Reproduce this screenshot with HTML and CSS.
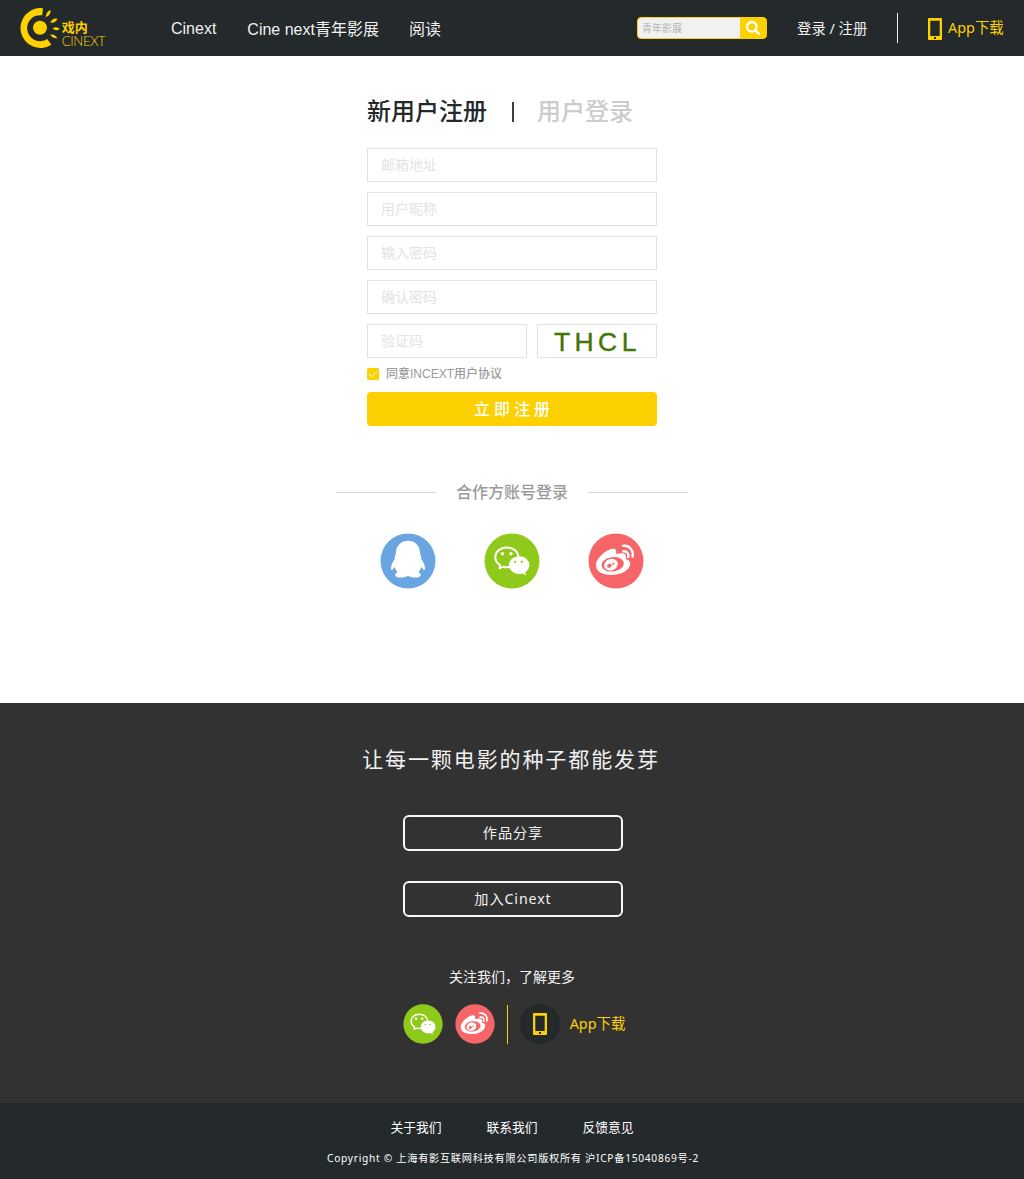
FILE: index.html
```html
<!DOCTYPE html>
<html lang="zh-CN">
<head>
<meta charset="utf-8">
<title>戏内 CINEXT</title>
<link rel="stylesheet" href="styles.css">
</head>
<body>
<svg class="defs" aria-hidden="true">
  <symbol id="qq" viewBox="0 0 56 56">
    <circle cx="28" cy="28" r="27.5" fill="#69a5e1"/>
    <path fill="#fff" d="M28 7.7C20 7.7 15.9 14 15.9 20C15.9 22 14.4 23 14.8 26C12.5 29 11 32.5 11 35.2C11 37.4 12.2 37.5 13 36.3C13.8 35 14.3 34 14.7 34.3C15.3 36.5 16.5 38 17.8 39.2C14 40.5 14.4 44.1 19 44.5C23 44.8 26.5 43.8 28 42.7C29.5 43.8 33 44.8 37 44.5C41.6 44.1 42 40.5 38.2 39.2C39.5 38 40.7 36.5 41.3 34.3C41.7 34 42.2 35 43 36.3C43.8 37.5 45 37.4 45 35.2C45 32.5 43.5 29 41.2 26C41.6 23 40.1 22 40.1 20C40.1 14 36 7.7 28 7.7Z"/>
  </symbol>
  <symbol id="wechat" viewBox="0 0 56 56">
    <circle cx="28" cy="28" r="27.5" fill="#8fc91a"/>
    <path fill="none" stroke="#fff" stroke-width="2" stroke-linejoin="round" d="M22.8 14.4C16.2 14.4 11.3 18.7 11.3 24.2C11.3 27.4 13.2 30.2 16 32L15.6 35.4L19 33.7C20.2 34 21.6 34.2 22.8 34.2C29.4 34.2 34.4 29.7 34.4 24.2C34.4 18.7 29.4 14.4 22.8 14.4Z"/>
    <circle cx="18.4" cy="20.7" r="1.7" fill="#fff"/><circle cx="27" cy="20.7" r="1.7" fill="#fff"/>
    <path fill="#fff" d="M35.2 23.2C29.4 23.2 25 27.1 25 32.1C25 37.1 29.4 41 35.2 41C36.5 41 37.7 40.8 38.8 40.5L42 42.3L41.2 39.2C43.8 37.7 45.4 35.1 45.4 32.1C45.4 27.1 41 23.2 35.2 23.2Z"/>
    <circle cx="31.2" cy="28.8" r="1.1" fill="#8fc91a"/><circle cx="37.8" cy="28.8" r="1.1" fill="#8fc91a"/>
  </symbol>
  <symbol id="weibo" viewBox="0 0 56 56">
    <circle cx="28" cy="28" r="27.5" fill="#f66669"/>
    <path fill="#fff" d="M24.6 15.8C18.5 16.5 8 25 8 32.3C8 38.7 14.5 42 22.8 42C34.5 42 42.2 36.3 42.2 30.7C42.2 27.9 40 26.7 37.6 26C39.2 20.7 36 18.7 28 21.2C28.8 17.6 28 15.4 24.6 15.8Z"/>
    <ellipse cx="24.7" cy="31.3" rx="11.2" ry="7.2" fill="#f66669" transform="rotate(-8 24.7 31.3)"/>
    <ellipse cx="23" cy="31.7" rx="7" ry="5.7" fill="#fff" transform="rotate(-20 23 31.7)"/>
    <ellipse cx="21.4" cy="32.8" rx="2.4" ry="1.9" fill="#f66669" transform="rotate(-20 21.4 32.8)"/>
    <circle cx="25.3" cy="30.8" r="1.1" fill="#f66669"/>
    <path fill="none" stroke="#fff" stroke-width="2.4" stroke-linecap="round" d="M35 12.9C41 11.8 46 17.5 44.5 23.6M35.3 18.3C38.8 17.8 41.2 20.6 40.1 24"/>
  </symbol>
  <symbol id="phone" viewBox="0 0 14 22">
    <path fill="#fdd000" fill-rule="evenodd" d="M.8 0H13.2Q14 0 14 .8V21.2Q14 22 13.2 22H.8Q0 22 0 21.2V.8Q0 0 .8 0ZM2.3 2.8V18H11.7V2.8ZM6 19.1V20.9H8V19.1Z"/>
  </symbol>
</svg>

<header class="topbar">
  <svg class="logo" viewBox="0 0 90 44">
    <g fill="#fdd000">
      <path d="M23 2.2A20 20 0 1 0 31.4 38.8L27.3 33A13 13 0 1 1 22.2 9.3Z"/>
      <circle cx="20" cy="21.8" r="7"/>
      <path d="M25.7 11.2Q26 5.5 30.7 4Q30.7 9.5 25.7 11.2Z"/>
      <path d="M30.3 16.5Q32.8 11.6 37.5 12.8Q35.2 17.7 30.3 16.5Z"/>
      <path d="M32.5 22.5Q36.5 19.7 39.8 23Q36 25.8 32.5 22.5Z"/>
      <path d="M30.3 28.5Q35 27.9 37.3 32.2Q32.6 32.9 30.3 28.5Z"/>
    </g>
    <text class="logo-cn" x="41.8" y="25.6">戏内</text>
    <text class="logo-en" x="41.7" y="39.7" textLength="44">CINEXT</text>
  </svg>
  <nav class="mainnav">
    <a class="nav-en">Cinext</a>
    <a>Cine next青年影展</a>
    <a>阅读</a>
  </nav>
  <div class="search">
    <span class="search-field">青年影展</span>
    <svg class="search-icon" viewBox="0 0 26 22"><circle cx="11.8" cy="8.8" r="4.8"/><path d="M15.4 12.4L19 16"/></svg>
  </div>
  <a class="account">登录 / 注册</a>
  <span class="top-rule"></span>
  <a class="download"><svg class="phone"><use href="#phone"/></svg><span>App下载</span></a>
</header>

<main class="main">
  <div class="tabs">
    <span class="tab active">新用户注册</span>
    <span class="tab-rule"></span>
    <span class="tab">用户登录</span>
  </div>
  <form class="form">
    <div class="field">邮箱地址</div>
    <div class="field">用户昵称</div>
    <div class="field">输入密码</div>
    <div class="field">确认密码</div>
    <div class="captcha-row">
      <div class="field code">验证码</div>
      <div class="captcha">THCL</div>
    </div>
    <div class="agree">
      <svg class="check" viewBox="0 0 12 12"><rect width="12" height="12" rx="1.5" fill="#fdd000"/><path d="M2 6L5 8.8L10 3.5" fill="none" stroke="#fff"/></svg>
      <span>同意INCEXT用户协议</span>
    </div>
    <div class="submit">立即注册</div>
  </form>
  <div class="partner-title"><span>合作方账号登录</span></div>
  <div class="partners">
    <svg><use href="#qq"/></svg>
    <svg><use href="#wechat"/></svg>
    <svg><use href="#weibo"/></svg>
  </div>
</main>

<section class="promo">
  <h2 class="slogan">让每一颗电影的种子都能发芽</h2>
  <a class="outline-btn">作品分享</a>
  <a class="outline-btn">加入Cinext</a>
  <p class="follow">关注我们，了解更多</p>
  <div class="follow-row">
    <svg class="social"><use href="#wechat"/></svg>
    <svg class="social"><use href="#weibo"/></svg>
    <span class="follow-rule"></span>
    <span class="app-badge"><svg class="phone"><use href="#phone"/></svg></span>
    <a class="follow-app">App下载</a>
  </div>
</section>

<footer class="footer">
  <nav class="links"><a>关于我们</a><a>联系我们</a><a>反馈意见</a></nav>
  <p class="copyright">Copyright © 上海有影互联网科技有限公司版权所有 沪ICP备15040869号-2</p>
</footer>
</body>
</html>
```

FILE: styles.css
```css
* { box-sizing: border-box; }
body {
  margin: 0;
  width: 1024px;
  background: #fff;
  font-family: "Noto Sans", "Noto Sans CJK SC", sans-serif;
  font-size: 14px;
  line-height: 20px;
}
p, h2 { margin: 0; font-weight: 400; }
svg { display: block; flex: none; }
a, span { white-space: nowrap; }
.defs { display: none; }

.topbar {
  height: 56px;
  background: #24292c;
  display: flex;
  align-items: center;
  padding: 0 20px;
  color: #f1f1f1;
}
.logo { width: 90px; height: 44px; }
.logo-cn { font: 700 13px "Noto Sans CJK SC", sans-serif; fill: #fdd000; }
.logo-en { font: 300 13.2px Lato, sans-serif; fill: #fdd000; }
.mainnav {
  display: flex;
  gap: 31px;
  margin-left: 61px;
  padding-top: 3px;
  font-family: "Liberation Sans", "Noto Sans CJK SC", sans-serif;
  font-size: 16px;
}
.mainnav a:last-child { margin-left: -1px; }
.nav-en { margin-top: -1px; }
.search {
  width: 130px;
  height: 22px;
  margin-left: auto;
  display: flex;
  border: 1px solid #fdd000;
  border-radius: 4px;
  background: #fdd000;
  overflow: hidden;
}
.search-field {
  width: 103px;
  padding-left: 4px;
  border-radius: 3px 0 0 3px;
  background: #f1f1f1;
  color: #b4b4b4;
  font-size: 10px;
  line-height: 21px;
}
.search-icon {
  width: 26px;
  height: 22px;
  fill: none;
  stroke: #fff;
  stroke-width: 2.4;
  stroke-linecap: round;
}
.account { margin-left: 30px; width: 70px; font-size: 14.4px; padding-top: 1px; }
.top-rule { width: 1px; height: 30px; margin-left: 30px; background: #f1f1f1; }
.download {
  width: 76px;
  margin-left: 30px;
  display: flex;
  align-items: center;
  gap: 6px;
  color: #fdd000;
  font-size: 14.4px;
}
.phone { width: 14px; height: 22px; }
.download .phone { margin-top: 2px; }

.main {
  height: 647px;
  padding-top: 37px;
  display: flex;
  flex-direction: column;
  align-items: center;
}
.tabs {
  width: 290px;
  height: 36px;
  display: flex;
  align-items: center;
  font-size: 24px;
  line-height: 36px;
  font-weight: 500;
  color: #ccc;
}
.tab.active { color: #24292c; }
.tab-rule { width: 2px; height: 20px; margin: 2px 23px 0 25px; background: #3c4043; }
.form { width: 290px; margin-top: 19px; display: flex; flex-direction: column; gap: 10px; }
.field {
  height: 34px;
  padding-left: 13px;
  border: 1px solid #e3e3e3;
  color: #e3e3e3;
  line-height: 32px;
}
.captcha-row { display: flex; gap: 10px; }
.code { width: 160px; }
.captcha {
  width: 120px;
  height: 34px;
  border: 1px solid #e3e3e3;
  color: #417505;
  font: 26.5px/35px "Liberation Sans", sans-serif;
  -webkit-text-stroke: .4px #417505;
  letter-spacing: 4.4px;
  padding-left: 16px;
}
.agree {
  height: 14px;
  margin-top: -1px;
  margin-bottom: 1px;
  display: flex;
  align-items: center;
  gap: 7px;
  color: #9b9b9b;
  font: 500 12px/14px "Liberation Sans", "Noto Sans CJK SC", sans-serif;
}
.check { width: 12px; height: 12px; }
.submit {
  height: 34px;
  border-radius: 4px;
  background: #fdd000;
  color: #fff;
  font-size: 16px;
  font-weight: 500;
  letter-spacing: 4px;
  line-height: 34px;
  text-align: center;
  padding-left: 4px;
}
.partner-title {
  margin-top: 54px;
  display: flex;
  align-items: center;
  gap: 20px;
  height: 24px;
  font-size: 16px;
  font-weight: 500;
  color: #9b9b9b;
}
.partner-title::before, .partner-title::after { content: ""; width: 100px; height: 1px; background: #d8d8d8; }
.partners { display: flex; gap: 48px; margin-top: 29px; }
.partners svg { width: 56px; height: 56px; }

.promo {
  height: 400px;
  background: #323232;
  color: #f1f1f1;
  display: flex;
  flex-direction: column;
  align-items: center;
  padding-top: 41px;
}
.slogan { font-size: 21px; line-height: 30px; letter-spacing: 1.9px; margin: 0 2px 41px 0; }
.outline-btn {
  width: 220px;
  height: 36px;
  margin: 0 0 30px 2px;
  border: 2px solid #f8f8f8;
  border-radius: 6px;
  text-align: center;
  font-size: 14.2px;
  line-height: 31px;
  letter-spacing: .9px;
}
.follow { margin-top: 20px; }
.follow-row { display: flex; align-items: center; margin: 17px 0 0 4px; }
.social { width: 40px; height: 40px; margin-right: 12px; }
.follow-rule { width: 1px; height: 39px; background: #fdd000; margin-right: 12px; }
.app-badge {
  width: 40px;
  height: 40px;
  border-radius: 50%;
  background: #24292c;
  display: flex;
  align-items: center;
  justify-content: center;
}
.follow-app { margin-left: 10px; color: #fdd000; font-size: 14.4px; }

.footer { height: 76px; background: #24292c; color: #fff; padding-top: 14px; text-align: center; }
.links { display: flex; justify-content: center; gap: 44.8px; font-size: 12.8px; }
.copyright { font-size: 10.2px; letter-spacing: .72px; margin: 11px 0 0 2px; line-height: 20px; white-space: nowrap; }
```
